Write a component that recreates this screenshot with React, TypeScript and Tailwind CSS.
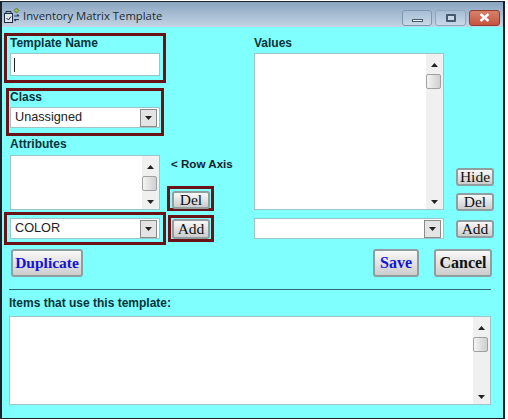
import type { ReactNode } from 'react';

const labelClass = "font-['Liberation_Sans',sans-serif] text-[12px] leading-[14px] font-bold text-[#06343a]";
const fieldClass = "border border-[#9fc4c8] bg-white";

function Arrow({ down = false }: { down?: boolean }) {
    return (
        <svg width="7" height="4" viewBox="0 0 7 4" className="shrink-0">
            <path d={down ? 'M0 0h7L3.5 4z' : 'M0 4h7L3.500 0z'} fill="#222" />
        </svg>
    );
}

function Scrollbar() {
    return (
        <div className="flex h-full w-[17px] shrink-0 flex-col items-center bg-[#f0f0f0]">
            <div className="flex h-[17px] items-center justify-center pt-1">
                <Arrow />
            </div>
            <div className="mt-[3px] h-[15px] w-[15px] self-start rounded-[2px] border border-[#a0a0a0] bg-gradient-to-r from-[#f4f4f4] to-[#cfcfcf]" />
            <div className="flex-1" />
            <div className="flex h-[15px] items-center justify-center">
                <Arrow down />
            </div>
        </div>
    );
}

function ListBox({ className }: { className: string }) {
    return (
        <div className={`flex justify-end ${fieldClass} ${className}`}>
            <Scrollbar />
        </div>
    );
}

function Select({ value, className }: { value?: string; className: string }) {
    return (
        <div className={`flex h-[21px] items-center justify-between pl-[4px] pr-[2px] ${fieldClass} ${className}`}>
            <span className="font-['Liberation_Sans',sans-serif] text-[12.7px] leading-none text-[#222]">{value}</span>
            <div className="flex h-[18px] w-[17px] items-center justify-center border border-[#8a8a8a] bg-[#e4e4e4]">
                <Arrow down />
            </div>
        </div>
    );
}

function Button({ children, className }: { children: ReactNode; className: string }) {
    return (
        <div
            className={`flex items-center justify-center rounded-[3px] border-2 border-[#8f9fa0] bg-gradient-to-b from-[#f8f8f8] to-[#cdcdcd] font-['Liberation_Serif',serif] leading-none ${className}`}
        >
            {children}
        </div>
    );
}

function SmallButton({ children, className = 'h-[18px]' }: { children: ReactNode; className?: string }) {
    return <Button className={`w-[38px] text-[15.5px] text-[#111] ${className}`}>{children}</Button>;
}

function RedBox({ children, className }: { children: ReactNode; className: string }) {
    return <div className={`border-[3px] border-[#6b1217] ${className}`}>{children}</div>;
}

export default function App() {
    return (
        <div className="h-[420px] w-[508px] bg-white pt-[1px]">
            <div className="flex h-[418px] w-[505px] flex-col border-x-2 border-y border-[#1c2228] bg-[#80ffff]">
                {/* Title bar */}
                <div className="flex h-[25px] shrink-0 items-center justify-between bg-gradient-to-b from-[#8aa5c0] to-[#c4d4e4] pl-[1px] pr-[3px]">
                    <div className="flex items-center gap-[2px] pt-[2px]">
                        <svg width="18" height="18" viewBox="0 0 18 18">
                            <rect x="1.500" y="6.500" width="8" height="9" fill="#dfe6ec" stroke="#1c2a44" />
                            <path d="M3 6V4.500h5V6M3.500 11l2 2 2.500-3.500" fill="none" stroke="#1c2a44" />
                            <path d="M13.500 1l2.500 2.500-2.500 2.500L11 3.500z" fill="#9bbd45" stroke="#4a5a20" strokeWidth="0.7" />
                            <path d="M11 9h5M16 9l-2-1.500M11 12.500h5M11 12.500l2 1.500" fill="none" stroke="#23406e" strokeWidth="1.200" />
                        </svg>
                        <span className="font-['Open_Sans',sans-serif] text-[11.3px] leading-none text-[#1c2a33]">
                            Inventory Matrix Template
                        </span>
                    </div>
                    <div className="mt-[6px] flex items-center gap-[3px]">
                        <div className="flex h-[16px] w-[30px] items-end justify-center rounded-[3px] border border-[#7d97b3] bg-gradient-to-b from-[#a7bdd4] to-[#c9d9e8] pb-[3px]">
                            <div className="h-[3px] w-[11px] border border-[#44596f] bg-white" />
                        </div>
                        <div className="flex h-[16px] w-[31px] items-center justify-center rounded-[3px] border border-[#8fa8c2] bg-gradient-to-b from-[#a7bdd4] to-[#c9d9e8]">
                            <div className="h-[8px] w-[10px] rounded-[1px] border-2 border-[#44596f] bg-[#c9d9e8]" />
                        </div>
                        <div className="flex h-[16px] w-[31px] items-center justify-center rounded-[3px] border border-[#8c3f30] bg-gradient-to-b from-[#d9806c] to-[#c6543c]">
                            <svg width="11" height="9" viewBox="0 0 11 9">
                                <path d="M1.500 1l8 7M9.500 1l-8 7" stroke="#fff" strokeWidth="2.400" />
                            </svg>
                        </div>
                    </div>
                </div>

                <div className="flex flex-1 flex-col">
                    {/* Upper part */}
                    <div className="flex h-[222px] shrink-0">
                        <div className="ml-[2px] mt-[6px] flex w-[162px] flex-col">
                            <RedBox className="h-[50px] px-[3px]">
                                <div className={labelClass}>Template Name</div>
                                <div className={`${fieldClass} mt-[3px] flex h-[23px] items-center pl-[3px]`}>
                                    <div className="h-[14px] w-[1px] bg-[#222]" />
                                </div>
                            </RedBox>
                            <RedBox className="ml-[2px] mt-[5px] h-[48px] w-[158px] px-[1px]">
                                <div className={`${labelClass} -mt-[1px]`}>Class</div>
                                <Select value="Unassigned" className="mt-[3px] w-[150px]" />
                            </RedBox>
                            <div className={`${labelClass} ml-[6px] mt-[1px]`}>Attributes</div>
                            <ListBox className="ml-[6px] mt-[4px] h-[55px] w-[150px]" />
                            <RedBox className="mt-[2px] h-[33px] px-[3px] pt-[3px]">
                                <Select value="COLOR" className="w-[150px]" />
                            </RedBox>
                        </div>
                        <div className="ml-[1px] flex w-[87px] flex-col">
                            <div className="ml-[4px] mt-[130px] font-['Liberation_Sans',sans-serif] text-[11.6px] leading-[14px] font-bold text-[#14222a]">
                                &lt; Row Axis
                            </div>
                            <RedBox className="mt-[15px] h-[25px] w-[47px] pl-[2px] pt-[2px]">
                                <SmallButton>Del</SmallButton>
                            </RedBox>
                            <RedBox className="ml-[1px] mt-[4px] h-[27px] w-[46px] pl-[1px] pt-[1px]">
                                <SmallButton className="h-[20px]">Add</SmallButton>
                            </RedBox>
                        </div>
                        <div className="flex w-[190px] flex-col">
                            <div className={`${labelClass} mt-[9px]`}>Values</div>
                            <ListBox className="mt-[3px] h-[157px] w-[190px]" />
                            <Select className="mt-[8px] w-[190px]" />
                        </div>
                        <div className="ml-[12px] flex flex-col pt-[141px]">
                            <SmallButton>Hide</SmallButton>
                            <div className="mt-[7px]">
                                <SmallButton>Del</SmallButton>
                            </div>
                            <div className="mt-[9px]">
                                <SmallButton>Add</SmallButton>
                            </div>
                        </div>
                    </div>

                    {/* Action buttons */}
                    <div className="flex items-start pl-[9px]">
                        <Button className="h-[28px] w-[72px] text-[15.5px] font-bold text-[#1414d8]">Duplicate</Button>
                        <Button className="ml-[290px] h-[28px] w-[46px] text-[16px] font-bold text-[#1414d8]">Save</Button>
                        <Button className="ml-[15px] h-[28px] w-[58px] text-[16px] font-bold text-[#111]">Cancel</Button>
                    </div>

                    <div className="ml-[7px] mt-[12px] h-[1px] w-[482px] bg-[#2f6a70]" />
                    <div className={`${labelClass} ml-[7px] mt-[6px]`}>Items that use this template:</div>
                    <ListBox className="ml-[7px] mt-[6px] h-[89px] w-[482px]" />
                </div>
            </div>
        </div>
    );
}
